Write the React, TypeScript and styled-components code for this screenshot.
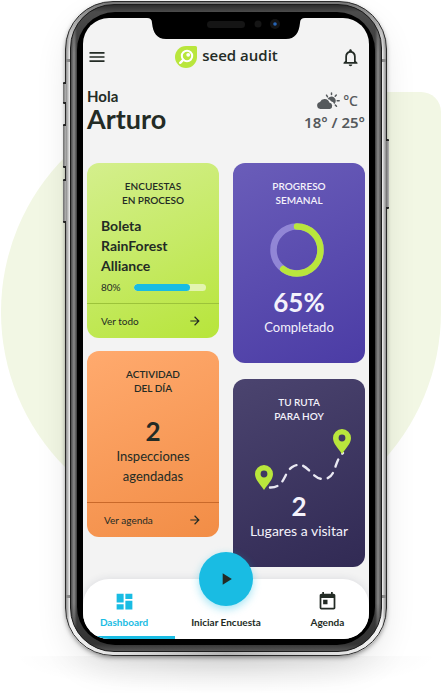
import React from "react";
import styled, { createGlobalStyle } from "styled-components";
import {
  MdArrowForward,
  MdDashboard,
  MdMenu,
  MdNotificationsNone,
  MdPlayArrow,
  MdToday,
} from "react-icons/md";

const ink = "#232b25";
const lime = "#b9e63c";
const cyan = "#19bce3";

const GlobalStyle = createGlobalStyle`
  *, *::before, *::after { box-sizing: border-box; }
  body {
    margin: 0;
    background: #fff;
    color: ${ink};
    font-family: Lato, "Open Sans", sans-serif;
    overflow-x: hidden;
  }
  h1, h2, p { margin: 0; font-weight: inherit; }
  button { font: inherit; color: inherit; background: none; border: 0; padding: 0; cursor: pointer; }
  a { color: inherit; text-decoration: none; }
  svg { display: block; }
`;

const Stage = styled.div`
  position: relative;
  padding: 1px 55px 0 65px;
  overflow: hidden;
`;

const Blob = styled.div`
  position: absolute;
  z-index: 0;
  top: 92px;
  left: 1px;
  right: 1px;
  aspect-ratio: 1;
  background: #f2f7e4;
  border-radius: 50% 20px 50% 50%;
`;

const Phone = styled.div`
  position: relative;
  z-index: 1;
  padding: 2px 4px 3px;
  border-radius: 48px;
  border: 1px solid #2a2a2a;
  background:
    linear-gradient(180deg, #777, rgba(119, 119, 119, 0) 50px),
    linear-gradient(90deg, #8d8d8d, #f2f2f2 4px, #b5b5b5 50%, #f2f2f2 calc(100% - 4px), #8d8d8d);
  box-shadow: 0 2px 5px -1px rgba(0, 0, 0, 0.5), 0 14px 36px -6px rgba(0, 0, 0, 0.12);
`;

const Bezel = styled.div`
  padding: 7px 6px 6px;
  border-radius: 44px;
  border: 1px solid #1c1c1c;
  background:
    linear-gradient(180deg, #2b2b2b, #4c4c4c 7px, rgba(60, 60, 60, 0) 48px, rgba(60, 60, 60, 0) calc(100% - 48px), #333 calc(100% - 7px), #555),
    linear-gradient(90deg, #4a4a4a, #8a8a8a 3px, #3b3b3b 6px, #3b3b3b calc(100% - 6px), #8a8a8a calc(100% - 3px), #4a4a4a);
`;

const Glass = styled.div`
  padding: 6px;
  border-radius: 38px;
  background: #000;
`;

const Screen = styled.div`
  position: relative;
  border-radius: 26px;
  background: #f3f3f3;
  overflow: hidden;
`;

const SideKey = styled.span<{ $side: "left" | "right"; $top: number; $length: number }>`
  position: absolute;
  ${(p) => p.$side}: -3px;
  top: ${(p) => p.$top}px;
  width: 3px;
  height: ${(p) => p.$length}px;
  border: solid #222;
  border-width: 2px 0;
  border-radius: 1px;
  background: linear-gradient(90deg, #6c6c6c, #b5b5b5);
`;

const AntennaBand = styled.span<{ $side: "left" | "right"; $edge: "top" | "bottom" }>`
  position: absolute;
  ${(p) => p.$side}: 0;
  ${(p) => p.$edge}: 57px;
  width: 4px;
  height: 3px;
  background: #8b8b8b;
`;

const Notch = styled.div`
  position: absolute;
  top: 0;
  left: 50%;
  width: 164px;
  transform: translateX(-50%);
`;

const Content = styled.div`
  padding: 26px 4px 12px;
`;

const Header = styled.header`
  display: grid;
  grid-template-columns: 1fr auto 1fr;
  align-items: center;
  height: 24px;
`;

const IconButton = styled.button<{ $end?: boolean }>`
  justify-self: ${(p) => (p.$end ? "end" : "start")};
  padding: ${(p) => (p.$end ? "0 4px" : "0")};
`;

const Brand = styled.a`
  display: flex;
  align-items: center;
  gap: 4px;
  font: 600 15px/22px "Open Sans", sans-serif;
`;

const BrandName = styled.span`
  padding-bottom: 4px;
`;

const Intro = styled.section`
  display: flex;
  justify-content: space-between;
  height: 46px;
  margin: 20px 0 29px;
`;

const Greeting = styled.p`
  font-size: 15px;
  line-height: 16px;
  font-weight: 700;
`;

const UserName = styled.h1`
  font-size: 27px;
  line-height: 30px;
  font-weight: 700;
`;

const Weather = styled.div`
  display: flex;
  flex-direction: column;
  align-items: flex-end;
  padding-top: 3px;
  font: 600 15px/22px "Noto Sans", sans-serif;
  color: #55595c;
`;

const WeatherNow = styled.div`
  display: flex;
  align-items: center;
  gap: 3px;
  padding-right: 7px;
  font-size: 14px;
  line-height: 20px;
  font-weight: 500;
`;

const Board = styled.main`
  display: grid;
  grid-template-columns: minmax(0, 1fr) minmax(0, 1fr);
  gap: 14px;
  align-items: start;
`;

const Column = styled.div<{ $gap: number }>`
  display: flex;
  flex-direction: column;
  gap: ${(p) => p.$gap}px;
`;

const tones = {
  green: { background: "linear-gradient(155deg, #d4ef8d, #c6ea66 50%, #b7e53a)", text: ink, line: "#9cc33a" },
  orange: { background: "linear-gradient(155deg, #ffaa6e, #f28d46)", text: ink, line: "#c9692a" },
  purple: { background: "linear-gradient(155deg, #6a5db9, #4b3ca5)", text: "#f4f2fb", line: "" },
  navy: { background: "linear-gradient(155deg, #4b446f, #312a54)", text: "#f4f2fb", line: "" },
};

const Card = styled.section<{ $tone: keyof typeof tones }>`
  display: flex;
  flex-direction: column;
  padding-top: 16px;
  border-radius: 12px;
  background: ${(p) => tones[p.$tone].background};
  color: ${(p) => tones[p.$tone].text};
  text-align: center;
`;

const CardTitle = styled.h2`
  font-size: 10px;
  line-height: 14px;
  font-weight: 600;
`;

const Figure = styled.p`
  font-size: 26px;
  line-height: 30px;
  font-weight: 700;
`;

const Caption = styled.p<{ $bottom: number }>`
  font-size: 13px;
  line-height: 20px;
  padding: 0 20px ${(p) => p.$bottom}px;
`;

const WideCaption = styled(Caption)`
  font-size: 14px;
  padding-left: 8px;
  padding-right: 8px;
`;

const SurveyName = styled.p`
  padding: 9px 40px 3px 14px;
  font-size: 14px;
  line-height: 20px;
  font-weight: 700;
  text-align: left;
`;

const ProgressRow = styled.label`
  display: flex;
  align-items: center;
  gap: 13px;
  padding: 0 13px 8px 14px;
  font-size: 10px;
  line-height: 16px;
`;

const Meter = styled.progress`
  appearance: none;
  flex: 1;
  min-width: 0;
  height: 7px;
  border: 0;
  border-radius: 4px;
  overflow: hidden;
  background: #e3f4b0;
  &::-webkit-progress-bar { background: #e3f4b0; }
  &::-webkit-progress-value { background: ${cyan}; border-radius: 4px; }
  &::-moz-progress-bar { background: ${cyan}; border-radius: 4px; }
`;

const CardLink = styled.a<{ $tone: keyof typeof tones }>`
  display: flex;
  align-items: center;
  justify-content: space-between;
  height: 35px;
  padding: 0 17px 0 14px;
  border-top: 1px solid ${(p) => tones[p.$tone].line};
  font-size: 10px;
  line-height: 16px;
`;

const AgendaLink = styled(CardLink)`
  padding-left: 17px;
`;

const RingBox = styled.div`
  display: flex;
  justify-content: center;
  padding: 16px 4px 10px 0;
`;

const RouteBox = styled.div`
  display: flex;
  justify-content: center;
  padding: 4px 0 0 4px;
`;

const FigureBox = styled.div`
  padding-top: 21px;
`;

const Nav = styled.nav`
  position: relative;
  display: grid;
  grid-template-columns: 29fr 32fr 29fr;
  border-radius: 26px 26px 0 0;
  background: #fff;
  box-shadow: 0 0 8px rgba(40, 50, 80, 0.12);
`;

const NavItem = styled.button<{ $active?: boolean; $shift?: "left" | "right" }>`
  display: flex;
  flex-direction: column;
  align-items: center;
  justify-content: flex-end;
  gap: 2px;
  padding: 0 ${(p) => (p.$shift === "left" ? 10 : 0)}px 6px ${(p) => (p.$shift === "right" ? 9 : 0)}px;
  border-bottom: 3px solid ${(p) => (p.$active ? cyan : "transparent")};
  color: ${(p) => (p.$active ? cyan : ink)};
  font-size: 10px;
  line-height: 16px;
  font-weight: 700;
  white-space: nowrap;
`;

const PlayDisc = styled.span`
  display: grid;
  place-items: center;
  width: 54px;
  height: 54px;
  margin: -27px 0 6px;
  border-radius: 50%;
  background: ${cyan};
  box-shadow: 0 3px 8px rgba(25, 188, 227, 0.4);
`;

const Ground = styled.div`
  height: 37px;
  margin: 0 -50px;
  background: radial-gradient(ellipse 50% 100% at 50% 0, rgba(0, 0, 0, 0.1), rgba(0, 0, 0, 0.03) 60%, transparent);
`;

const LogoMark = () => (
  <svg width="24" height="24" viewBox="0 0 24 24" aria-hidden="true">
    <path d="M12 1H21.500Q23 1 23 2.500V12A11 11 0 1 1 12 1Z" fill={lime} />
    <circle cx="13" cy="11" r="5.200" fill="none" stroke="#fff" strokeWidth="2" />
    <path d="M9.200 14.800L6.200 17.800" stroke="#fff" strokeWidth="2.400" strokeLinecap="round" />
    <circle cx="14.200" cy="9.800" r="1.900" fill="#fff" />
  </svg>
);

const CloudSun = () => (
  <svg width="24" height="18" viewBox="0 0 24 18" aria-hidden="true">
    <g stroke="#55595c" strokeWidth="1.500" strokeLinecap="round">
      <path d="M10.500 3.200L11.500 4.800M15.500 1V2.600M20.300 3L19.200 4.300M21.200 8.700H23.200M19.300 13L20.500 14.300" />
    </g>
    <path d="M11.600 7A4.300 4.300 0 1 1 18.200 12.200Q17.800 9.600 15 9.200Q14.200 7.300 11.600 7Z" fill="#55595c" />
    <path d="M4.300 17A3.600 3.600 0 0 1 4 9.900A5 5 0 0 1 13.300 10.600A3.300 3.300 0 0 1 14 17Z" fill="#55595c" />
  </svg>
);

const Ring = () => (
  <svg width="54" height="54" viewBox="0 0 54 54" role="img" aria-label="65%">
    <circle cx="27" cy="27" r="23.500" fill="none" stroke="#9186d6" strokeWidth="6.500" />
    <circle
      cx="27"
      cy="27"
      r="23.500"
      fill="none"
      stroke={lime}
      strokeWidth="6.500"
      strokeLinecap="round"
      pathLength={100}
      strokeDasharray="60 100"
      transform="rotate(-90 27 27)"
    />
  </svg>
);

const Pin = ({ x, y }: { x: number; y: number }) => (
  <path
    transform={`translate(${x} ${y})`}
    fill={lime}
    fillRule="evenodd"
    d="M0 0C-4 -6 -9 -10.500 -9 -16A9 9 0 0 1 9 -16C9 -10.500 4 -6 0 0ZM0 -12.600A3.400 3.400 0 1 0 0 -19.400A3.400 3.400 0 1 0 0 -12.600Z"
  />
);

const Route = () => (
  <svg width="106" height="64" viewBox="0 0 106 64" aria-hidden="true">
    <path
      d="M22 60.500C38 61 35 44 46 39C59 33 63 52 75 52C89 52 85 35 95 26"
      fill="none"
      stroke="#e9e8f2"
      strokeWidth="2.400"
      strokeLinecap="round"
      strokeDasharray="7.500 7"
    />
    <Pin x={16} y={63} />
    <Pin x={94} y={27} />
  </svg>
);

export default function App() {
  return (
    <>
      <GlobalStyle />
      <Stage>
        <Blob />
        <Phone>
          <SideKey $side="left" $top={80} $length={22} />
          <SideKey $side="left" $top={122} $length={44} />
          <SideKey $side="left" $top={177} $length={44} />
          <SideKey $side="right" $top={137} $length={70} />
          <AntennaBand $side="left" $edge="top" />
          <AntennaBand $side="right" $edge="top" />
          <AntennaBand $side="left" $edge="bottom" />
          <AntennaBand $side="right" $edge="bottom" />
          <Bezel>
            <Glass>
              <Screen>
                <Notch>
                  <svg width="164" height="21" viewBox="0 0 164 21" aria-hidden="true">
                    <path d="M3 0Q8 0 8 5C9 15 13 21 22 21H142C151 21 155 15 156 5Q156 0 161 0Z" fill="#000" />
                    <rect x="63" y="3" width="38" height="7" rx="3.500" fill="#151515" />
                    <circle cx="114" cy="6" r="3.500" fill="#151515" />
                    <circle cx="131" cy="6" r="5" fill="#141414" />
                    <circle cx="131" cy="6" r="1.800" fill="#2764b4" />
                  </svg>
                </Notch>
                <Content>
                  <Header>
                    <IconButton aria-label="Menú">
                      <MdMenu size={20} />
                    </IconButton>
                    <Brand href="#">
                      <LogoMark />
                      <BrandName>seed audit</BrandName>
                    </Brand>
                    <IconButton $end aria-label="Notificaciones">
                      <MdNotificationsNone size={21} />
                    </IconButton>
                  </Header>
                  <Intro>
                    <div>
                      <Greeting>Hola</Greeting>
                      <UserName>Arturo</UserName>
                    </div>
                    <Weather>
                      <WeatherNow>
                        <CloudSun />
                        °C
                      </WeatherNow>
                      <span>18° / 25°</span>
                    </Weather>
                  </Intro>
                  <Board>
                    <Column $gap={13}>
                      <Card $tone="green">
                        <CardTitle>
                          ENCUESTAS
                          <br />
                          EN PROCESO
                        </CardTitle>
                        <SurveyName>
                          Boleta RainForest Alliance
                        </SurveyName>
                        <ProgressRow>
                          80%
                          <Meter value={78} max={100} />
                        </ProgressRow>
                        <CardLink href="#" $tone="green">
                          Ver todo
                          <MdArrowForward size={14} />
                        </CardLink>
                      </Card>
                      <Card $tone="orange">
                        <CardTitle>
                          ACTIVIDAD
                          <br />
                          DEL DÍA
                        </CardTitle>
                        <FigureBox>
                          <Figure>2</Figure>
                        </FigureBox>
                        <Caption $bottom={16}>Inspecciones agendadas</Caption>
                        <AgendaLink href="#" $tone="orange">
                          Ver agenda
                          <MdArrowForward size={14} />
                        </AgendaLink>
                      </Card>
                    </Column>
                    <Column $gap={16}>
                      <Card $tone="purple">
                        <CardTitle>
                          PROGRESO
                          <br />
                          SEMANAL
                        </CardTitle>
                        <RingBox>
                          <Ring />
                        </RingBox>
                        <Figure>65%</Figure>
                        <Caption $bottom={26}>Completado</Caption>
                      </Card>
                      <Card $tone="navy">
                        <CardTitle>
                          TU RUTA
                          <br />
                          PARA HOY
                        </CardTitle>
                        <RouteBox>
                          <Route />
                        </RouteBox>
                        <Figure>2</Figure>
                        <WideCaption $bottom={26}>Lugares a visitar</WideCaption>
                      </Card>
                    </Column>
                  </Board>
                </Content>
                <Nav>
                  <NavItem $active $shift="left">
                    <MdDashboard size={21} />
                    Dashboard
                  </NavItem>
                  <NavItem>
                    <PlayDisc>
                      <MdPlayArrow size={20} />
                    </PlayDisc>
                    Iniciar Encuesta
                  </NavItem>
                  <NavItem $shift="right">
                    <MdToday size={21} />
                    Agenda
                  </NavItem>
                </Nav>
              </Screen>
            </Glass>
          </Bezel>
        </Phone>
        <Ground />
      </Stage>
    </>
  );
}
